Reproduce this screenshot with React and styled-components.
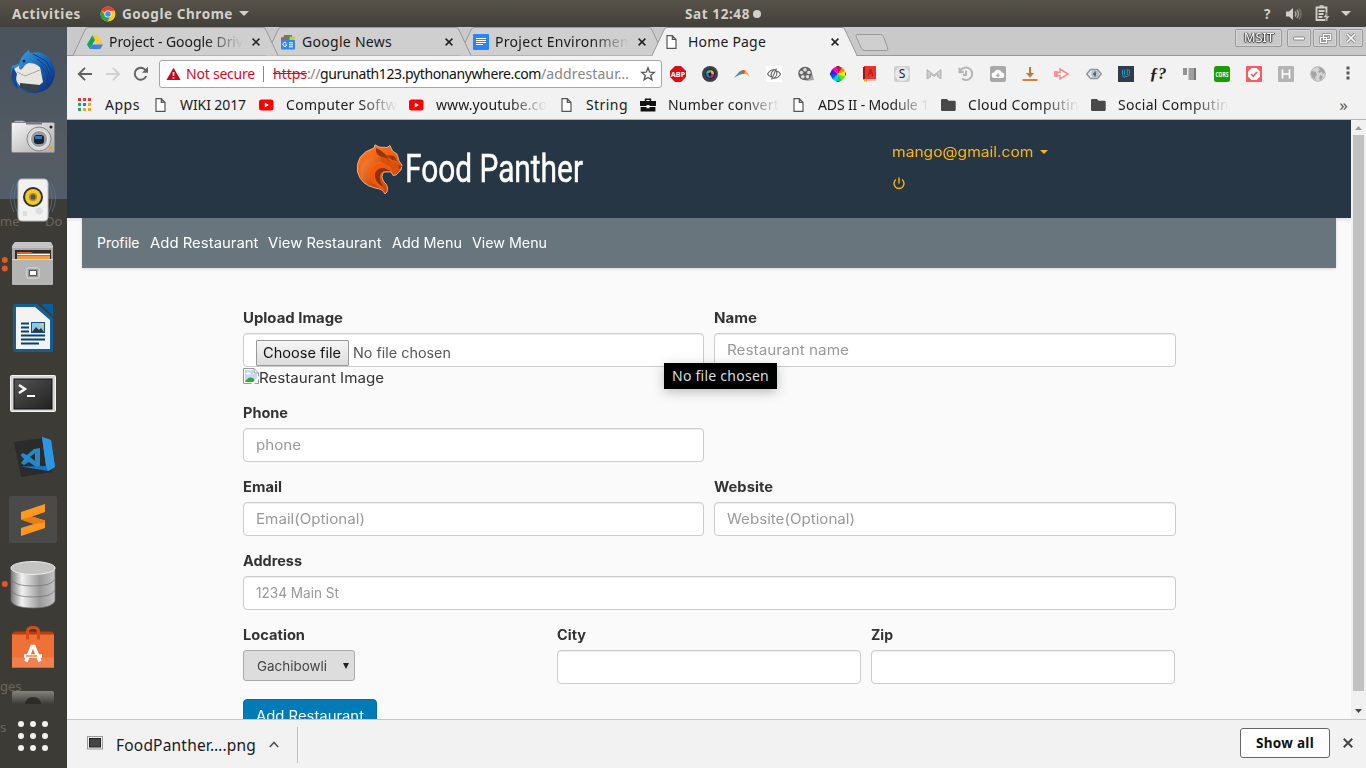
import React, { useLayoutEffect, useRef } from "react";
import styled, { createGlobalStyle, css } from "styled-components";

const ui = '"Noto Sans", "Open Sans", sans-serif';
const web = 'Inter, "Open Sans", sans-serif';

const Global = createGlobalStyle`
  * { box-sizing: border-box; }
  body { margin: 0; overflow: hidden; background: #3d3b35; }
  svg { display: block; flex: none; }
`;

/* ---------- text that keeps to a set width ---------- */
const Line = styled.span`
  display: block;
  flex: none;
  width: ${(p) => p.$w}px;
  white-space: pre;
  ${(p) => p.$fade && css`
    overflow: hidden;
    mask-image: linear-gradient(to right, #000 calc(100% - 38px), transparent);
  `}
`;
const Glyphs = styled.span`
  display: inline-block;
  transform-origin: 0 50%;
`;

function Fit({ w, fade, stretch, children }) {
  const ref = useRef(null);
  useLayoutEffect(() => {
    const el = ref.current;
    el.style.letterSpacing = "0px";
    el.style.transform = "none";
    const natural = el.getBoundingClientRect().width;
    if (stretch) el.style.transform = `scaleX(${w / natural})`;
    else el.style.letterSpacing = `${(w - natural) / children.length}px`;
  }, [w, stretch, children]);
  return (
    <Line $w={w} $fade={fade}>
      <Glyphs ref={ref}>{children}</Glyphs>
    </Line>
  );
}
const WebText = (props) => <Fit stretch {...props} />;

/* ---------- desktop ---------- */
const Desktop = styled.div`
  width: 1366px;
  height: 768px;
  display: flex;
  flex-direction: column;
  overflow: hidden;
  font-family: ${ui};
`;
const TopBar = styled.div`
  height: 27px;
  flex: none;
  display: grid;
  grid-template-columns: 685px 1fr auto;
  align-items: center;
  background: linear-gradient(#57534a, #42403a);
  color: #d3d0c9;
  font-size: 13.5px;
  font-weight: 700;
  line-height: 26px;
`;
const BarGroup = styled.div`
  display: flex;
  align-items: center;
  height: 26px;
  padding-left: ${(p) => p.$left || 0}px;
  padding-right: ${(p) => p.$right || 0}px;
  gap: ${(p) => p.$gap || 0}px;
`;
const Dot = styled.span`
  width: 8px;
  height: 8px;
  border-radius: 50%;
  background: #d3d0c9;
`;
const Body = styled.div`
  display: flex;
  height: 741px;
`;

/* ---------- dock ---------- */
const Dock = styled.aside`
  position: relative;
  width: 67px;
  flex: none;
  overflow: hidden;
  background: linear-gradient(#4b535c 0, #4b5660 60px, #555b62 120px, #535d68 172px, #3d3b35 172px);
`;
const DockList = styled.div`
  position: relative;
  height: 677px;
  padding-top: 13px;
  overflow: hidden;
`;
const DockSlot = styled.div`
  height: 64px;
`;
const Ghost = styled.span`
  position: absolute;
  left: ${(p) => p.$x}px;
  top: ${(p) => p.$y}px;
  color: #6a675f;
  font-size: 13px;
  line-height: 18px;
`;
const AppsButton = styled.div`
  position: relative;
  display: grid;
  grid-template-columns: repeat(3, 6px);
  gap: 6px;
  padding: 17px 0 0 18px;
`;
const AppsDot = styled.span`
  width: 6px;
  height: 6px;
  border-radius: 50%;
  background: #f2f1ef;
`;

/* ---------- browser ---------- */
const Window = styled.main`
  width: 1299px;
  display: flex;
  flex-direction: column;
  background: #f2f2f2;
  color: #1a1a1a;
  font-size: 14px;
`;
const TabStrip = styled.div`
  height: 29px;
  flex: none;
  display: flex;
  padding-left: 6px;
  background: linear-gradient(#c9c9c9 28px, #999 28px);
`;
const TabBox = styled.div`
  position: relative;
  z-index: ${(p) => p.$z};
  width: 205px;
  height: 29px;
  flex: none;
  margin-right: -12px;
  display: flex;
  align-items: center;
  padding: 0 0 0 14px;
  line-height: 28px;
`;
const TabShape = styled.svg`
  position: absolute;
  inset: 0;
`;
const TabInner = styled.div`
  position: relative;
  display: flex;
  align-items: center;
  width: 175px;
`;
const TabTitle = styled.div`
  width: 143px;
  margin-left: 6px;
`;
const WindowButtons = styled.div`
  display: flex;
  gap: 2px;
  margin: 2px 3px 0 auto;
`;
const WinButton = styled.div`
  width: ${(p) => p.$w}px;
  height: 18px;
  margin-right: ${(p) => p.$mr || 0}px;
  display: flex;
  align-items: center;
  justify-content: center;
  border: 1px solid #999;
  border-radius: 2px;
  box-shadow: inset 0 0 0 1px #d6d6d6;
  color: #fff;
  font-size: 12px;
  line-height: 16px;
  text-shadow: 0 0 1px #333, 0 1px 1px #444, 1px 0 1px #444, -1px 0 1px #444;
`;
const Toolbar = styled.div`
  height: 36px;
  flex: none;
  display: flex;
  align-items: center;
`;
const NavButtons = styled.div`
  display: flex;
  width: 92px;
  gap: 12px;
  padding-left: 10px;
`;
const UrlBox = styled.div`
  width: 503px;
  height: 28px;
  flex: none;
  display: flex;
  align-items: center;
  padding: 0 5px 0 6px;
  border: 1px solid #a6a6a6;
  border-radius: 3px;
  background: #fff;
  line-height: 24px;
`;
const UrlPart = styled.span`
  color: ${(p) => p.$color};
  ${Glyphs} {
    text-decoration: ${(p) => (p.$strike ? "line-through" : "none")};
  }
`;
const Separator = styled.i`
  width: 1px;
  height: 16px;
  margin: 0 9px 0 8px;
  background: #8a8a8a;
`;
const Extensions = styled.div`
  display: flex;
`;
const Ext = styled.div`
  width: ${(p) => p.$w || 32}px;
  display: flex;
  justify-content: center;
`;
const Bookmarks = styled.div`
  height: 28px;
  flex: none;
  position: relative;
  display: flex;
  align-items: center;
  padding: 0 0 2px 11px;
  border-bottom: 1px solid #b4b4b4;
  line-height: 24px;
`;
const Bookmark = styled.div`
  display: flex;
  align-items: center;
  width: ${(p) => p.$w}px;
  flex: none;
`;
const BookmarkIcon = styled.span`
  width: ${(p) => p.$w}px;
  flex: none;
`;
const More = styled.span`
  margin-left: auto;
  padding-right: 18px;
  color: #5a5a5a;
  font-size: 17px;
`;

/* ---------- page ---------- */
const Viewport = styled.div`
  height: 599px;
  flex: none;
  display: flex;
  overflow: hidden;
`;
const Page = styled.div`
  width: 1284px;
  height: 599px;
  overflow: hidden;
  background: #fafafa;
  color: #333;
  font-family: ${web};
  font-size: 14px;
  line-height: 20px;
`;
const Header = styled.header`
  height: 98px;
  display: flex;
  background: #273644;
  box-shadow: 0 1px 4px rgba(0, 0, 0, 0.15);
`;
const Brand = styled.div`
  width: 824.5px;
  display: flex;
  padding: 24px 0 0 289px;
`;
const BrandName = styled.div`
  padding: 0 0 0 1px;
  color: #fff;
  font-family: "Liberation Sans Narrow", Roboto, sans-serif;
  font-size: 38px;
  line-height: 50px;
  -webkit-text-stroke: 0.5px #fff;
`;
const Account = styled.div`
  display: flex;
  flex-direction: column;
  gap: 15px;
  padding-top: 22px;
  color: #ffb606;
`;
const AccountRow = styled.div`
  display: flex;
  align-items: center;
  gap: 7px;
`;
const Nav = styled.nav`
  height: 50px;
  margin: 0 15px;
  padding: 15px;
  display: flex;
  gap: 10px;
  background: #69757d;
  color: #fff;
  box-shadow: 0 1px 3px rgba(0, 0, 0, 0.15);
`;
const Form = styled.form`
  width: 933px;
  margin: 40px 0 0 176px;
`;
const Row = styled.div`
  display: grid;
  grid-template-columns: ${(p) => p.$cols};
  gap: 10px;
  height: ${(p) => p.$h}px;
`;
const Label = styled.label`
  display: block;
  height: 25px;
  font-weight: 700;
`;
const Field = styled.div`
  height: 34px;
  padding: ${(p) => (p.$file ? "6px 12px 0" : "6px 11.5px")};
  display: flex;
  border: 1px solid #ccc;
  border-radius: 4px;
  background: #fff;
  box-shadow: inset 0 1px 1px rgba(0, 0, 0, 0.075);
  color: ${(p) => (p.$file ? "#555" : "#999")};
`;
const FileButton = styled.span`
  height: 26px;
  flex: none;
  margin-right: 4px;
  padding: 0 7px 0 6px;
  border: 1px solid #999;
  border-radius: 1px;
  background: linear-gradient(#f6f6f6, #dcdcdc);
  color: #111;
  line-height: 24px;
`;
const FileName = styled.span`
  line-height: 25px;
`;
const BrokenImage = styled.div`
  display: flex;
  height: 22px;
  padding-top: 1px;
`;
const Select = styled.div`
  width: 112px;
  height: 31px;
  display: flex;
  align-items: center;
  padding-left: 13px;
  gap: 16px;
  border: 1px solid #aaa;
  border-radius: 3px;
  background: #ddd;
  color: #444;
  font-size: 13px;
`;
const Submit = styled.div`
  width: 134px;
  height: 34px;
  padding: 6px 12px;
  border: 1px solid #006fa5;
  border-radius: 4px;
  background: #007bb6;
  color: #fff;
`;
const Tooltip = styled.div`
  position: absolute;
  z-index: 10;
  left: 664px;
  top: 363px;
  width: 113px;
  height: 26px;
  padding-left: 8px;
  background: #000;
  color: #ddd;
  font: 14px/25px ${ui};
  box-shadow: 0 3px 12px rgba(0, 0, 0, 0.25);
`;
const ScrollBar = styled.div`
  width: 15px;
  display: flex;
  flex-direction: column;
  align-items: center;
  padding: 6px 0 6px;
  background: #f1f1f1;
`;
const Thumb = styled.div`
  width: 11px;
  height: 556px;
  margin: 5px 0 auto;
  background: #c1c1c1;
`;
const Downloads = styled.footer`
  height: 49px;
  flex: none;
  display: flex;
  align-items: center;
  padding: 1px 13px 0 20px;
  border-top: 1px solid #c8c8c8;
  font-size: 15.5px;
`;
const DownloadItem = styled.div`
  width: 211px;
  height: 36px;
  display: flex;
  align-items: center;
  gap: 13px;
  border-right: 1px solid #c0c0c0;
`;
const DownloadIcon = styled.span`
  margin-bottom: 4px;
`;
const ShowAll = styled.div`
  width: 90px;
  height: 30px;
  margin: -3px 13px 0 auto;
  padding: 0 15px;
  border: 1px solid #666;
  border-radius: 3px;
  background: #fff;
  color: #111;
  font-size: 13.5px;
  font-weight: 700;
  line-height: 28px;
`;
const CloseBar = styled.span`
  margin-bottom: 3px;
`;

/* ---------- icons ---------- */
const Chrome = () => (
  <svg width="16" height="16" viewBox="0 0 16 16">
    <circle cx="8" cy="8" r="7.5" fill="#fbc928" />
    <path d="M8 8 1.4 4.5A7.5 7.5 0 0 1 14.7 4.8L8 5z" fill="#dc4437" />
    <path d="M1.4 4.5A7.5 7.5 0 0 0 7.5 15.5L10.7 9.6 8 8 5 9z" fill="#2fa24c" />
    <circle cx="8" cy="8" r="3.6" fill="#f4f4f4" />
    <circle cx="8" cy="8" r="2.8" fill="#4a8af4" />
  </svg>
);
const Caret = ({ w = 10, h = 5, fill = "#d3d0c9" }) => (
  <svg width={w} height={h} viewBox="0 0 10 5" preserveAspectRatio="none"><path d="M0 0h10L5 5z" fill={fill} /></svg>
);
const Drive = () => (
  <svg width="16" height="16" viewBox="0 0 16 16">
    <path d="M5.3 1.3h5.4L16 10.5h-5.4z" fill="#ffc928" />
    <path d="M5.3 1.3 8 6 2.7 15 0 10.5z" fill="#18a05e" />
    <path d="M5.4 10.5H16L13.3 15H2.7z" fill="#3f7fe8" />
  </svg>
);
const News = () => (
  <svg width="16" height="16" viewBox="0 0 16 16">
    <path d="M4 1h8v6H3z" fill="#25a556" /><path d="m10 2.500 5 .5-1 4H9z" fill="#f5b929" />
    <path d="m1 3.500 6-1 2 4.500H1z" fill="#e5443a" />
    <rect x="1" y="6" width="14" height="9.5" rx="1" fill="#2f86f5" />
    <path d="M6.400 9.200a2 2 0 1 0 .4 1.700H5.200M9 8.800h4M9 10.800h4M9 12.800h4" fill="none" stroke="#fff" strokeWidth="1" />
  </svg>
);
const Docs = () => (
  <svg width="16" height="16" viewBox="0 0 16 16">
    <rect width="16" height="16" rx="1" fill="#2684fc" />
    <path d="M3 4.500h10M3 6.500h10M3 8.500h10M3 10.500h7" stroke="#fff" strokeWidth="1.1" />
  </svg>
);
const Sheet = () => (
  <svg width="11" height="14" viewBox="0 0 11 14">
    <path d="M1 .7h5.3L10 4.400v8.900H1zM6.300.7v3.700H10" fill="#fff" stroke="#555" strokeWidth="1.2" />
  </svg>
);
const Cross = ({ s = 8, c = "#222" }) => (
  <svg width={s} height={s} viewBox="0 0 8 8"><path d="m.6.6 6.800 6.800M7.400.6.6 7.400" stroke={c} strokeWidth="1.5" /></svg>
);
const YouTube = () => (
  <svg width="15" height="12" viewBox="0 0 15 12">
    <rect y=".5" width="14.5" height="11" rx="2.5" fill="#f00" /><path d="m5.800 3.600 4 2.400-4 2.400z" fill="#fff" />
  </svg>
);
const Folder = () => (
  <svg width="15" height="12" viewBox="0 0 15 12"><path d="M1.200 0H6l1.500 1.700h6q1.200 0 1.200 1.100v8q0 1.200-1.200 1.200H1.200Q0 12 0 10.800V1.200Q0 0 1.200 0z" fill="#484848" /></svg>
);
const Briefcase = () => (
  <svg width="16" height="14" viewBox="0 0 16 14">
    <path d="M5.500 3V1.200h5V3" fill="none" stroke="#111" strokeWidth="1.4" />
    <path d="M0 3h16v5H9.500V7h-3v1H0zM.6 9h5.900v1.200h3V9h5.900v4.500H.6z" fill="#111" />
  </svg>
);
const AppsGrid = () => (
  <svg width="13" height="13" viewBox="0 0 13 13">
    {["#f0353a", "#f0353a", "#f0353a", "#23a566", "#2b7de9", "#f5a31c", "#23a566", "#f5a31c", "#f5a31c"].map((c, i) => (
      <rect key={i} x={(i % 3) * 5} y={Math.floor(i / 3) * 5} width="3" height="3" fill={c} />
    ))}
  </svg>
);
const G = ({ children }) => <svg width="16" height="16" viewBox="0 0 16 16">{children}</svg>;
const mark = { textAnchor: "middle", fontFamily: "Noto Sans" };

const extensionIcons = [
  <G key="abp"><path d="M5 0h6l5 5v6l-5 5H5l-5-5V5z" fill="#dc0d12" /><text x="8" y="10.8" {...mark} fontSize="7.3" fontWeight="700" fill="#fff">ABP</text></G>,
  <G key="lens"><circle cx="8" cy="8" r="8" fill="#3c4248" /><circle cx="8" cy="8" r="4.8" fill="#15191e" /><path d="M8 4a4 4 0 0 1 4 4H9z" fill="#f0b52f" /><path d="M4 8a4 4 0 0 1 4-4v3z" fill="#2cc1a4" /><path d="M12 8a4 4 0 0 1-4 4l1-4z" fill="#c12c90" /><path d="M8 12a4 4 0 0 1-4-4h3z" fill="#2b73c1" /><circle cx="8" cy="8" r="1.5" fill="#111" /></G>,
  <G key="arc"><path d="M0 12C2 9 4 7 7 5l2 3C6 8 3 10 0 12z" fill="#3b83c5" /><path d="M4 7.200Q6 5 8.500 4l1.200 3L6 8.500z" fill="#32a271" /><path d="M8 4.100q2-.5 3.500.4L10.600 8 8.500 8z" fill="#e84d37" /><path d="M11.200 4.300Q14 7 16 11q-2.500-2.700-5.800-3.400z" fill="#f3a92c" /></G>,
  <G key="code"><rect width="16" height="16" fill="#fff" /><path d="M1.500 8q3-5 7-4.200Q4 6 5.500 11 3 10.500 1.500 8zM14.500 8q-3 5-7 4.200Q12 10 10.500 5 13 5.500 14.500 8zM10.500 2.500 5.500 13.500" fill="none" stroke="#666" strokeWidth="1.100" /></G>,
  <G key="reel"><path d="M8 1q5 0 6 6l2 7-8 1z" fill="#a5a5a5" /><circle cx="7" cy="7.500" r="6.800" fill="#666" /><g fill="#ddd"><circle cx="7" cy="3.700" r="1.800" /><circle cx="3.400" cy="6.500" r="1.800" /><circle cx="4.800" cy="10.800" r="1.800" /><circle cx="9.500" cy="10.800" r="1.800" /><circle cx="10.800" cy="6.500" r="1.800" /></g></G>,
  <G key="wheel">{["#f80", "#fe0", "#5e0", "#0c6", "#0ce", "#05f", "#60f", "#f0c", "#f02"].map((c, i) => <path key={c} d="M8 8 5.300 1 A7.500 7.500 0 0 1 10.700 1z" fill={c} transform={`rotate(${i * 40 + 50} 8 8)`} />)}<path d="M6.500 .3h3M6.500 15.700h3M.3 6.500v3M15.700 6.500v3" stroke="#222" strokeWidth="1" /></G>,
  <G key="dict"><path d="M2 0h12v15H3L1 13z" fill="#e8352f" /><path d="M2 1v12" stroke="#8c1d19" strokeWidth="2" /><path d="M2 14h12" stroke="#eee" strokeWidth="1.500" /><text x="8.500" y="10" {...mark} fontSize="9" fill="#941916">A</text><path d="M2 13h3v3l-1.500-1L2 16z" fill="#f5a31c" /></G>,
  <G key="s"><rect width="16" height="16" rx="2" fill="#d0d0d0" /><circle cx="8" cy="8" r="7" fill="#e9e9e9" /><text x="8" y="12.200" {...mark} fontSize="12" fill="#222">S</text></G>,
  <G key="m"><path d="M1 3.500 8 9l7-5.500V13l-3.500-2.500V8L8 10.500 4.500 8v3L1 13z" fill="#ccc" stroke="#aaa" strokeWidth=".8" /></G>,
  <G key="history"><path d="M2.500 5A6.200 6.200 0 1 1 4 12.500M1.500 1.800v4.400H6M8 4.500V9H5" fill="none" stroke="#b5b5b5" strokeWidth="2" /></G>,
  <G key="cloud"><rect width="16" height="16" rx="2" fill="#a8a8a8" /><path d="M4.500 12a2.700 2.700 0 0 1-.3-5.400 4 4 0 0 1 7.600 0 2.700 2.700 0 0 1-.3 5.400z" fill="#fff" /><path d="M8 7v3.500M6.500 9 8 10.700 9.500 9" stroke="#aaa" fill="none" strokeWidth="1.200" /></G>,
  <G key="down"><path d="M8 1v8" stroke="#cc7431" strokeWidth="2" /><path d="M4 7h8l-4 4.800z" fill="#cc7431" /><path d="M.5 14h15" stroke="#cc7431" strokeWidth="1.800" /></G>,
  <G key="arrow"><path d="M0 5h4v6H0z" fill="#fb9595" /><path d="m6 3 8 5-8 5V9.500H3v-3h3z" fill="#fff" stroke="#fb8b8b" strokeWidth="1.500" /></G>,
  <G key="eye"><path d="M4.500 3.500h7L15.300 8l-3.800 4.500h-7L.7 8z" fill="#e6e9ed" stroke="#8a939c" strokeWidth="1.400" /><circle cx="9" cy="8" r="3.800" fill="#b7bfc7" /><path d="M9 5.500v5M7 8h3" stroke="#555d65" strokeWidth="1.500" /></G>,
  <G key="u"><rect width="16" height="16" fill="#303c4a" /><path d="M4.500 4v4.500q0 3 2.500 3M6.500 3.500v5q0 2.500 2.500 2t2.500-3V4.500L9.300 3.500V9" fill="none" stroke="#2298c8" strokeWidth="1" /></G>,
  <G key="f"><text x="8" y="13.200" textAnchor="middle" fontFamily="Liberation Serif" fontSize="17" fontStyle="italic" fontWeight="700" fill="#222">ƒ?</text></G>,
  <G key="cols"><path d="M1 2h4v7H1z" fill="#929292" /><path d="M6.500 2H14v12H6.500z" fill="#9f9f9f" /><path d="M12 2h2v12h-2z" fill="#777" /></G>,
  <G key="cors"><rect width="16" height="16" rx="2.500" fill="#18a000" /><text x="8" y="10.500" {...mark} fontSize="6.200" textLength="13" lengthAdjust="spacingAndGlyphs" fontWeight="700" fill="#fff">CORS</text></G>,
  <G key="check"><rect width="16" height="16" rx="1" fill="#fd5960" /><path d="M5.500 2h5L14 5.500v5L10.500 14h-5L2 10.500v-5z" fill="#fff" /><path d="m5 8 2.300 2.300L11 6" fill="none" stroke="#fd5960" strokeWidth="1.700" /></G>,
  <G key="h"><rect width="16" height="16" rx="1" fill="#b4b4b4" /><path d="M4.500 3.500v9M11.500 3.500v9M4.500 8h7" stroke="#fff" strokeWidth="1.700" /></G>,
  <G key="globe"><circle cx="8" cy="8" r="7.300" fill="#d6d6d6" stroke="#b5b5b5" /><path d="M8 1q5 0 7 6l-2 1-1-2-3 1-1-2 2-1zM2 5l4 1 1 3-2 2 1 3Q1 12 1 7zM10 9l3 1-2 4-2-1z" fill="#a5a5a5" /></G>,
];

const DockIcon = ({ children }) => <svg width="67" height="64" viewBox="0 0 67 64">{children}</svg>;
const orange = "#e95420";

const Thunderbird = () => (
  <DockIcon>
    <defs><linearGradient id="bird" x2="1" y2="1"><stop stopColor="#3e9fdf" /><stop offset=".5" stopColor="#1764b4" /><stop offset="1" stopColor="#10246f" /></linearGradient></defs>
    <path d="M12 26Q9 38 17 47q8 7 20 6 12-2 16-14Q52 23 37 17z" fill="url(#bird)" />
    <path d="M14 29q10-8 25-7l4 20-9 8-14-4q-7-8-6-17z" fill="#e8e5df" />
    <path d="m20 43 20 2-3 7-8-1-9-3z" fill="#3a4148" />
    <path d="m17 32 8 4 15-6" fill="none" stroke="#aaa69f" />
    <path d="M19 28q0-12 10-18l1 3 8-1q15 4 17 20 0 11-9 18l0-3-7 4q8-10 4-19-4-9-14-9-4 1-6 5-3 3-4 0z" fill="url(#bird)" />
    <path d="m33 14 13 7 7 12M37 19l9 7 5 13M41 25l6 9 1 12" fill="none" stroke="#0c3e88" />
    <path d="M13 27q-5 14 5 22-3-10-1-15z" fill="#164696" />
    <circle cx="24" cy="21" r="1.500" fill="#10245c" />
  </DockIcon>
);
const Camera = () => (
  <DockIcon>
    <defs><linearGradient id="metal" x2="1" y2="1"><stop stopColor="#f6f6f6" /><stop offset="1" stopColor="#aaa" /></linearGradient></defs>
    <rect x="14" y="17" width="11" height="5" rx="2" fill="#ddd" stroke="#888" />
    <rect x="11.500" y="18.500" width="43" height="30" rx="1.500" fill="url(#metal)" stroke="#888" />
    <path d="M26 19.500h16" stroke="#777" strokeWidth="2" />
    <circle cx="39" cy="35" r="12" fill="#d5d5d5" stroke="#888" /><circle cx="39" cy="35" r="8.500" fill="#999" stroke="#eee" />
    <rect x="34" y="31" width="10" height="9" rx="3" fill="#14233a" /><rect x="35" y="32" width="7" height="3" fill="#3872b5" />
    <circle cx="51" cy="23" r="1.500" fill="#222" /><rect x="49" y="42" width="3" height="3" fill="#f5a31c" />
  </DockIcon>
);
const Speaker = () => (
  <DockIcon>
    <g fill="none" stroke="#5f7f9f" opacity=".6"><path d="M18 14q-8 16 0 32M14 16q-7 14 0 28M48 14q8 16 0 32M52 16q7 14 0 28" /></g>
    <path d="M22 11h22q4 0 4 5v32q0 5-4 5H22q-4 0-4-5V16q0-5 4-5z" fill="#f1f1f0" stroke="#b9b9b7" />
    <circle cx="33" cy="29" r="10" fill="#302f2a" /><circle cx="33" cy="29" r="8" fill="#edc832" /><circle cx="33" cy="29" r="4" fill="#b68b16" /><circle cx="33" cy="29" r="2.500" fill="#555" />
    <circle cx="39" cy="43" r="3.500" fill="#ddd" /><rect x="23" y="43" width="4" height="5" fill="#ddd" />
  </DockIcon>
);
const Files = () => (
  <DockIcon>
    <circle cx="4.800" cy="28" r="3" fill={orange} /><circle cx="4.800" cy="36.500" r="3" fill={orange} />
    <g transform="translate(0 1)">
      <path d="m14 10 1-1h36l2 4v10H12V13z" fill="#c4c4c4" /><path d="M12 15h41v12H12z" fill="#aaa" />
      <path d="M15 17h36v9H15z" fill="#362b24" /><path d="m17 19h14l2 1h17v5H17z" fill="#d46823" /><path d="M17 21.500h33" stroke="#fff" />
      <path d="M17 23h33v3H17z" fill="#f69a3d" />
      <rect x="12" y="26" width="41" height="26" rx="1" fill="#b4b4b4" /><path d="M12 26.500h41" stroke="#ddd" />
      <rect x="27" y="35" width="12" height="10" rx="1.500" fill="#999" stroke="#e6e6e6" /><rect x="29.500" y="37.500" width="7" height="5" fill="#fff" stroke="#555" />
    </g>
  </DockIcon>
);
const Writer = () => (
  <DockIcon>
    <path d="M15 8h22l16 14v32q0 2-2 2H15q-2 0-2-2V10q0-2 2-2z" fill="#125f95" /><path d="M41 8h12v12z" fill="#0c5d99" />
    <path d="M16 11h19l15 13v29H16z" fill="#f3f3f3" />
    <path d="M21 27.500h8M21 31.500h8M21 35.500h8M21 39.500h24M21 43.500h24M21 47.500h18" stroke="#07416e" strokeWidth="2" />
    <rect x="31.500" y="26.500" width="13" height="10" fill="#8fc7e8" stroke="#17527e" /><path d="m32 36 4-5 3 3 2-2 3 4z" fill="#333" /><circle cx="42" cy="29" r="1.500" fill="#f4d044" />
  </DockIcon>
);
const Terminal = () => (
  <DockIcon>
    <defs><linearGradient id="term" x2="1" y2="1"><stop stopColor="#555" /><stop offset=".5" stopColor="#3a3a3a" /><stop offset="1" stopColor="#222" /></linearGradient></defs>
    <rect x="10.500" y="15.500" width="45" height="36" rx="1" fill="#d5d5d5" stroke="#f3f3f3" /><rect x="14" y="19" width="38" height="30" fill="url(#term)" stroke="#111" />
    <path d="m19 25 6 4-6 4" fill="none" stroke="#f6f6f6" strokeWidth="2.500" /><path d="M27 36h8" stroke="#fff" strokeWidth="2" />
  </DockIcon>
);
const Code = () => (
  <DockIcon>
    <path d="m14 18 28-4 10 34-31 5z" fill="#2c2b2c" />
    <path d="m42 13 9 3 4 27-7 4-27-4.500 25-.5z" fill="#1277c4" /><path d="m42 13 9 3 4 27-7 4-2-5z" fill="#2d96e2" />
    <path fillRule="evenodd" d="m40 24-6 1-7 6-4-2-2.500 2 3.500 4-3 4 3 2 5-3 7 5 4-1zM35 29v8l-5-4z" fill="#2489ca" />
  </DockIcon>
);
const Sublime = () => (
  <DockIcon>
    <rect x="9" y="8" width="48" height="47" rx="2" fill="#4a4a49" />
    <path d="m21 24 24-8v8l-13 4.500 13 4v7.500l-24 8v-8l13-4-13-4.500z" fill="#ff9820" /><path d="m21 31.500 11-3 13 4v2l-11 1.500z" fill="#ec7b14" />
  </DockIcon>
);
const Database = () => (
  <DockIcon>
    <defs><linearGradient id="disk"><stop stopColor="#777" /><stop offset=".25" stopColor="#f2f2f2" /><stop offset=".65" stopColor="#999" /><stop offset="1" stopColor="#c5c5c5" /></linearGradient></defs>
    <circle cx="4.800" cy="32" r="3" fill={orange} />
    {[37, 26, 15].map((y) => <path key={y} d={`M11 ${y}v12q3 7 22 7t22-7v-12z`} fill="url(#disk)" stroke="#707070" strokeWidth=".7" />)}
    <ellipse cx="33" cy="16" rx="22" ry="6.500" fill="#c4c4c4" stroke="#eee" />
  </DockIcon>
);
const Software = () => (
  <DockIcon>
    <g transform="translate(0 1.500)">
      <path d="m12 16 3-2h37l2 2v6H12z" fill="#b83d0f" /><path d="M12 17h42v33H12z" fill="#ef7137" />
      <path d="M12 40h42v10H12z" fill="#f0814f" />
      <path d="M27.500 22v-8q0-4 5.500-4t5.500 4v8" fill="none" stroke="#d94d15" strokeWidth="3" />
      <path d="m26 44 6-15h2l6 15M24 38.500h18" fill="none" stroke="#fff" strokeWidth="3.500" /><path d="M26 38.500h11" stroke="#e9652e" strokeWidth="1.200" />
    </g>
  </DockIcon>
);
const Hidden = () => (
  <DockIcon>
    <defs><linearGradient id="fade" x2="0" y2="1"><stop stopColor="#85857f" /><stop offset="1" stopColor="#3d3b35" /></linearGradient></defs>
    <path d="M12 13q0-2 2-2h38q2 0 2 2v11H12z" fill="url(#fade)" /><path d="M25 24q1-7 8-7t8 7z" fill="#2d2c28" />
  </DockIcon>
);
const dockApps = [Thunderbird, Camera, Speaker, Files, Writer, Terminal, Code, Sublime, Database, Software, Hidden];

const Panther = () => (
  <svg width="48" height="51" viewBox="0 0 48 51">
    <defs>
      <linearGradient id="fur" x2=".7" y2="1"><stop stopColor="#ff7a28" /><stop offset=".5" stopColor="#f4600f" /><stop offset="1" stopColor="#c74304" /></linearGradient>
      <linearGradient id="mane" x2="1" y2=".6"><stop stopColor="#ff8a3c" /><stop offset="1" stopColor="#a83600" /></linearGradient>
    </defs>
    <path d="M18 4 19 .8l4 2.200 8 .5 3-2 2.500 5.500 4.500 3 2 7 3 4-1 5-5 5-3 .5-2-3.500h-7q-4 4 0 10 5 4 3 10l-2 2q-2-5-10-6Q5 41 1.500 28-1 10 18 4z" fill="url(#fur)" stroke="#e9c7ae" strokeWidth=".8" />
    <path d="M5 33Q2 17 18 13q10-2 18 5l-10-1Q10 18 12 32q2 8 12 11Q10 43 5 33z" fill="url(#mane)" />
    <path d="M15 33q-2-12 10-13 8 0 13 7H28q-8 2-4 12l5 8q-12-5-14-14z" fill="#ef5a0b" />
    <path d="M19 33q-1-9 9-9l7 3h-7q-5 2-4 9l3 7q-7-4-8-10z" fill="#8e3000" />
    <path d="M20 4q-1 7 6 9l8 2-5-5-5-4zM31 11l7 1 3 5-5-1zM41 21l5 1-3 3z" fill="#9a3400" />
    <path d="M25 13q8 6 15 5l3 5-6 4q-3-6-12-9z" fill="#d9500a" />
  </svg>
);
const Broken = () => (
  <svg width="16" height="16" viewBox="0 0 16 16">
    <path d="M.5.5h10.500l4.500 4.500v10.500H.5z" fill="#fff" stroke="#999" />
    <path d="M2 2h8v4h4v8H2z" fill="#c5d9f4" /><path d="M2 14q3-6 8-4l3 4z" fill="#37a53c" /><path d="M3 6.500q1-3 3-2 2 0 2 2z" fill="#fff" />
    <path d="M11 .5V5h4.500" fill="none" stroke="#999" /><path d="m8 16 8-8v3l-5 5z" fill="#fff" />
  </svg>
);

/* ---------- content ---------- */
const tabs = [
  { icon: <Drive />, title: "Project - Google Driv", w: 134, fade: true, z: 3 },
  { icon: <News />, title: "Google News", w: 90, z: 2 },
  { icon: <Docs />, title: "Project Environmen", w: 134, fade: true, z: 1 },
  { icon: <Sheet />, title: "Home Page", w: 78, z: 4, active: true },
];
const bookmarks = [
  { icon: <AppsGrid />, iw: 27, text: "Apps", w: 35, box: 77 },
  { icon: <Sheet />, iw: 25, text: "WIKI 2017", w: 66, box: 104 },
  { icon: <YouTube />, iw: 27, text: "Computer Softw", w: 111, fade: true, box: 150 },
  { icon: <YouTube />, iw: 27, text: "www.youtube.co", w: 111, fade: true, box: 152 },
  { icon: <Sheet />, iw: 25, text: "String", w: 42, box: 79 },
  { icon: <Briefcase />, iw: 28, text: "Number convert", w: 111, fade: true, box: 153 },
  { icon: <Sheet />, iw: 25, text: "ADS II - Module 1", w: 111, fade: true, box: 148 },
  { icon: <Folder />, iw: 27, text: "Cloud Computin", w: 111, fade: true, box: 150 },
  { icon: <Folder />, iw: 27, text: "Social Computin", w: 111, fade: true, box: 150 },
];
const navLinks = [["Profile", 42.500], ["Add Restaurant", 108.500], ["View Restaurant", 113.500], ["Add Menu", 70], ["View Menu", 75]];

function Tab({ icon, title, w, fade, z, active }) {
  return (
    <TabBox $z={z}>
      <TabShape width="205" height="29" viewBox="0 0 205 29">
        <path d="M0 28.500 12 3q1-2.500 3-2.500h175q2 0 3 2.500l12 25.500" fill={active ? "#f2f2f2" : "#cfcfcf"} stroke="#999" />
        {active && <path d="M1 28.500h203" stroke="#f2f2f2" />}
      </TabShape>
      <TabInner>
        <BookmarkIcon $w={16}>{icon}</BookmarkIcon>
        <TabTitle><Fit w={w} fade={fade}>{title}</Fit></TabTitle>
        <Cross />
      </TabInner>
    </TabBox>
  );
}

function Group({ label, lw, text, w }) {
  return (
    <div>
      <Label><WebText w={lw}>{label}</WebText></Label>
      <Field>{text && <WebText w={w}>{text}</WebText>}</Field>
    </div>
  );
}

export default function App() {
  return (
    <Desktop>
      <Global />
      <TopBar>
        <BarGroup $left={12}>
          <Fit w={69}>Activities</Fit>
          <BarGroup $left={19} $gap={6}>
            <Chrome /><Fit w={111}>Google Chrome</Fit><Caret />
          </BarGroup>
        </BarGroup>
        <BarGroup $gap={3}><Fit w={65}>Sat 12:48</Fit><Dot /></BarGroup>
        <BarGroup $right={15} $gap={10}>
          <BarGroup $right={3}><Fit w={8}>?</Fit></BarGroup>
          <svg width="17" height="14" viewBox="0 0 17 14"><path d="M1 4.500h3L8 1v12L4 9.500H1z" fill="#d3d0c9" /><path d="M10 4.500q2 2.500 0 5M12 3q3 4 0 8" fill="none" stroke="#aaa79f" strokeWidth="1.400" /><path d="M14 1.500q4 5.500 0 11" fill="none" stroke="#77746c" strokeWidth="1.400" /></svg>
          <BarGroup $left={3}>
            <svg width="16" height="17" viewBox="0 0 16 17"><path d="M4 2.500h7.500V15H1.500V2.500zM4.500 1.200h4M3.500 6h6M3.500 9h5M3.500 12h4" fill="none" stroke="#d3d0c9" strokeWidth="1.800" /><path d="m12 7.500-4 5h3l-1 4 5-5.500h-3.500z" fill="#d3d0c9" stroke="#4b4841" strokeWidth=".5" /></svg>
          </BarGroup>
          <Caret />
        </BarGroup>
      </TopBar>
      <Body>
        <Dock>
          <Ghost $x={0} $y={185}>me</Ghost>
          <Ghost $x={45} $y={185}>Do</Ghost>
          <Ghost $x={0} $y={650}>ges</Ghost>
          <Ghost $x={0} $y={691}>s</Ghost>
          <DockList>
            {dockApps.map((Icon, i) => <DockSlot key={i}><Icon /></DockSlot>)}
          </DockList>
          <AppsButton>{Array.from({ length: 9 }, (_, i) => <AppsDot key={i} />)}</AppsButton>
        </Dock>
        <Window>
          <TabStrip>
            {tabs.map((t) => <Tab key={t.title} {...t} />)}
            <svg width="52" height="28" viewBox="6 0 52 28"><path d="M17.500 7.500h24q2 0 3 2l4 11q1 3-1 3h-22q-2 0-3-2l-5-11q-1-3 0-3z" fill="#cfcfcf" stroke="#999" /></svg>
            <WindowButtons>
              <WinButton $w={47} $mr={3}><Fit w={30} stretch>MSIT</Fit></WinButton>
              <WinButton $w={24}><svg width="12" height="5" viewBox="0 0 12 5"><rect x=".5" y="1" width="11" height="3" rx="1" fill="#fff" stroke="#888" /></svg></WinButton>
              <WinButton $w={24}><svg width="13" height="11" viewBox="0 0 13 11"><path d="M4.500 1.500h7v5h-7zM1.500 4.500h6v5h-6z" fill="none" stroke="#888" strokeWidth="2.400" /><path d="M4.500 1.500h7v5h-7zM1.500 4.500h6v5h-6z" fill="none" stroke="#fff" strokeWidth="1.100" /></svg></WinButton>
              <WinButton $w={24}><svg width="12" height="12" viewBox="0 0 12 12"><path d="m2 2 8 8M10 2l-8 8" stroke="#888" strokeWidth="3.400" /><path d="m2 2 8 8M10 2l-8 8" stroke="#fff" strokeWidth="1.700" /></svg></WinButton>
            </WindowButtons>
          </TabStrip>
          <Toolbar>
            <NavButtons>
              <G><path d="M15 8H2M8 1.800 1.800 8 8 14.200" fill="none" stroke="#5f6164" strokeWidth="1.900" /></G>
              <G><path d="M1 8h13M8 1.800 14.200 8 8 14.200" fill="none" stroke="#d1d1d1" strokeWidth="1.900" /></G>
              <G><path d="M13.300 10A6 6 0 1 1 12.700 4.300" fill="none" stroke="#5f6164" strokeWidth="1.900" /><path d="M15 .8v6H9z" fill="#5f6164" /></G>
            </NavButtons>
            <UrlBox>
              <svg width="15" height="14" viewBox="0 0 15 14"><path d="M7.500.8 14.600 13H.4z" fill="#d0021b" /><path d="M7.500 5v4M7.500 10.200v1.600" stroke="#fff" strokeWidth="1.600" /></svg>
              <BarGroup $left={5}><UrlPart $color="#d50a25"><Fit w={69}>Not secure</Fit></UrlPart></BarGroup>
              <Separator />
              <UrlPart $color="#d50a25" $strike><Fit w={34}>https</Fit></UrlPart>
              <UrlPart $color="#858585"><Fit w={13}>://</Fit></UrlPart>
              <UrlPart $color="#111"><Fit w={221}>gurunath123.pythonanywhere.com</Fit></UrlPart>
              <UrlPart $color="#858585"><Fit w={88}>/addrestaur…</Fit></UrlPart>
              <BarGroup $left={11}><svg width="16" height="16" viewBox="0 0 16 16"><path d="m8 1.800 1.700 4.300 4.600.3-3.600 3 1.200 4.500L8 11.400l-3.900 2.500 1.200-4.500-3.600-3 4.600-.3z" fill="none" stroke="#555" strokeWidth="1.300" /></svg></BarGroup>
            </UrlBox>
            <Extensions>
              {extensionIcons.map((icon) => <Ext key={icon.key}>{icon}</Ext>)}
              <Ext $w={28}><svg width="4" height="14" viewBox="0 0 4 14"><path d="M.5.500h3v3h-3zM.5 5.500h3v3h-3zM.5 10.500h3v3h-3z" fill="#5a5a5a" /></svg></Ext>
            </Extensions>
          </Toolbar>
          <Bookmarks>
            {bookmarks.map((b, i) => (
              <Bookmark key={i} $w={b.box}>
                <BookmarkIcon $w={b.iw}>{b.icon}</BookmarkIcon>
                <Fit w={b.w} fade={b.fade}>{b.text}</Fit>
              </Bookmark>
            ))}
            <More>»</More>
          </Bookmarks>
          <Viewport>
            <Page>
              <Header>
                <Brand><Panther /><BrandName><Fit w={178} stretch>Food Panther</Fit></BrandName></Brand>
                <Account>
                  <AccountRow><WebText w={141.500}>mango@gmail.com</WebText><Caret w={8} h={4} fill="#ffb606" /></AccountRow>
                  <svg width="14" height="13" viewBox="0 0 14 13"><path d="M4 2.500a5 5 0 1 0 6 0M7 .5v6" fill="none" stroke="#ffb606" strokeWidth="1.400" /></svg>
                </Account>
              </Header>
              <Nav>{navLinks.map(([t, w]) => <WebText key={t} w={w}>{t}</WebText>)}</Nav>
              <Form>
                <Row $cols="461px 462px" $h={95}>
                  <div>
                    <Label><WebText w={100}>Upload Image</WebText></Label>
                    <Field $file>
                      <FileButton><WebText w={78}>Choose file</WebText></FileButton>
                      <FileName><WebText w={98}>No file chosen</WebText></FileName>
                    </Field>
                    <BrokenImage><Broken /><WebText w={125}>Restaurant Image</WebText></BrokenImage>
                  </div>
                  <Group label="Name" lw={43} text="Restaurant name" w={122} />
                </Row>
                <Row $cols="461px 462px" $h={74}><Group label="Phone" lw={45} text="phone" w={45} /></Row>
                <Row $cols="461px 462px" $h={74}>
                  <Group label="Email" lw={39} text="Email(Optional)" w={109} />
                  <Group label="Website" lw={59} text="Website(Optional)" w={128} />
                </Row>
                <Row $cols="1fr" $h={74}><Group label="Address" lw={59} text="1234 Main St" w={83} /></Row>
                <Row $cols="repeat(3, 304px)" $h={74}>
                  <div>
                    <Label><WebText w={62}>Location</WebText></Label>
                    <Select><WebText w={70}>Gachibowli</WebText><Caret w={6} h={6} fill="#222" /></Select>
                  </div>
                  <Group label="City" lw={29} />
                  <Group label="Zip" lw={22} />
                </Row>
                <Submit><WebText w={108}>Add Restaurant</WebText></Submit>
              </Form>
            </Page>
            <ScrollBar>
              <svg width="7" height="4" viewBox="0 0 7 4"><path d="M0 4h7L3.500 0z" fill="#999" /></svg>
              <Thumb />
              <svg width="7" height="4" viewBox="0 0 7 4"><path d="M0 0h7L3.500 4z" fill="#444" /></svg>
            </ScrollBar>
          </Viewport>
          <Downloads>
            <DownloadItem>
              <DownloadIcon><svg width="16" height="14" viewBox="0 0 16 14"><rect x=".5" y=".5" width="15" height="12.500" fill="#eee" stroke="#999" /><rect x="2.500" y="2.500" width="11" height="8.500" fill="#454545" stroke="#222" /></svg></DownloadIcon>
              <Fit w={140}>FoodPanther….png</Fit>
              <svg width="10" height="7" viewBox="0 0 10 7"><path d="m.8 6 4.200-4.500L9.200 6" fill="none" stroke="#555" strokeWidth="1.600" /></svg>
            </DownloadItem>
            <ShowAll><Fit w={58}>Show all</Fit></ShowAll>
            <CloseBar><Cross s={10} c="#444" /></CloseBar>
          </Downloads>
        </Window>
      </Body>
      <Tooltip><Fit w={97}>No file chosen</Fit></Tooltip>
    </Desktop>
  );
}
